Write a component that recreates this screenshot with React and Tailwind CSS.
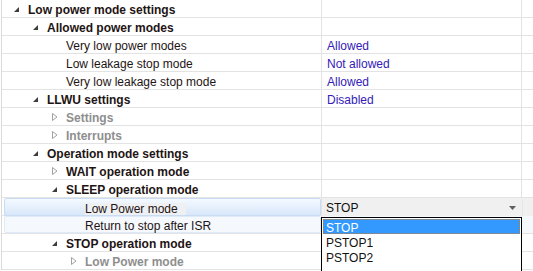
import React from "react";

const rows = [
  { l: 0, t: "Low power mode settings", s: "open", b: true },
  { l: 1, t: "Allowed power modes", s: "open", b: true },
  { l: 2, t: "Very low power modes", s: "leaf", v: "Allowed" },
  { l: 2, t: "Low leakage stop mode", s: "leaf", v: "Not allowed" },
  { l: 2, t: "Very low leakage stop mode", s: "leaf", v: "Allowed" },
  { l: 1, t: "LLWU settings", s: "open", b: true, v: "Disabled" },
  { l: 2, t: "Settings", s: "closed", b: true, g: true },
  { l: 2, t: "Interrupts", s: "closed", b: true, g: true },
  { l: 1, t: "Operation mode settings", s: "open", b: true },
  { l: 2, t: "WAIT operation mode", s: "closed", b: true },
  { l: 2, t: "SLEEP operation mode", s: "open", b: true },
  { l: 3, t: "Low Power mode", s: "leaf", sel: true },
  { l: 3, t: "Return to stop after ISR", s: "leaf", hov: true },
  { l: 2, t: "STOP operation mode", s: "open", b: true },
  { l: 3, t: "Low Power mode", s: "closed", b: true, g: true },
];

const indent = ["pl-[12px]", "pl-[31px]", "pl-[50px]", "pl-[69px]"];

function Open() {
  return (
    <svg width="5" height="5" viewBox="0 0 5 5" className="block">
      <polygon points="5,0 5,5 0,5" fill="#3c3c3c" />
    </svg>
  );
}

function Closed() {
  return (
    <svg width="6" height="8" viewBox="0 0 6 8" className="block">
      <polygon points="0.5,0.5 5,4 0.5,7.5" fill="none" stroke="#a0a0a0" strokeWidth="1" />
    </svg>
  );
}

function Row({ r }) {
  const textCls =
    (r.b ? "font-bold " : "") + (r.g ? "text-[#8e8e8e]" : "text-[#1e1414]");
  const label = (
    <div className={"flex h-full items-center pt-[3px] " + indent[r.l]}>
      <div className="flex w-[14px] items-center -mt-[2px]">
        {r.s === "open" && <Open />}
        {r.s === "closed" && <Closed />}
      </div>
      {r.sel ? (
        <span className={"bg-[#eef0f2] pr-[8px] " + textCls}>{r.t}</span>
      ) : (
        <span className={textCls}>{r.t}</span>
      )}
    </div>
  );
  return (
    <div className="flex h-[18px] border-b border-[#e3e3e3]">
      <div className="w-[320px] shrink-0 border-r border-[#e3e3e3] h-[17px]">
        {r.sel ? (
          <div className="ml-[2px] h-[18px] rounded-[2px] border border-[#c9dcf3] bg-gradient-to-b from-[#f4f9ff] to-[#d8e7fa]">
            <div className="-ml-[3px] -mt-px h-[18px]">{label}</div>
          </div>
        ) : r.hov ? (
          <div className="ml-[2px] h-[17px] rounded-[2px] border border-[#dfeaf8] bg-[#f5f9fe]">
            <div className="-ml-[3px] -mt-px h-[17px]">{label}</div>
          </div>
        ) : (
          label
        )}
      </div>
      {r.sel ? (
        <div className="flex h-[18px] flex-1 items-center bg-[#f0f0f0] pt-[2px]">
          <div className="flex w-[200px] items-center pl-[4px]">
            <span className="text-[#111]">STOP</span>
            <svg width="7" height="4" viewBox="0 0 7 4" className="ml-auto mr-[6px]">
              <polygon points="0,0 7,0 3.5,4" fill="#606060" />
            </svg>
          </div>
          <div className="h-full w-px bg-[#e6e6e6]" />
        </div>
      ) : (
        <>
          <div
            className={
              "flex w-[200px] items-center border-r border-[#e3e3e3] pl-[5px] pt-[3px] text-[#3320b8] " +
              (r.hov ? "bg-[#f5f9fe]" : "")
            }
          >
            {r.v}
          </div>
          <div className={"flex-1 " + (r.hov ? "bg-[#f5f9fe]" : "")} />
        </>
      )}
    </div>
  );
}

export default function App() {
  return (
    <div
      className="relative h-[271px] w-[533px] overflow-hidden bg-white text-[12px] leading-none"
      style={{ fontFamily: '"Liberation Sans", Arial, sans-serif' }}
    >
      <div className="ml-px border-l border-[#dadada]">
        {rows.map((r, i) => (
          <Row key={i} r={r} />
        ))}
      </div>
      <div className="absolute left-[321px] top-[217px] h-[60px] w-[201px] border border-black bg-white pt-px pl-px pr-px">
        <div className="flex h-[15px] items-center border border-dotted border-[#c87a2a] bg-[#3399ff] pl-[2px] pt-[2px] text-white">
          STOP
        </div>
        <div className="flex h-[15px] items-center pl-[3px] pt-[2px] text-[#111]">PSTOP1</div>
        <div className="flex h-[15px] items-center pl-[3px] pt-[2px] text-[#111]">PSTOP2</div>
      </div>
    </div>
  );
}
